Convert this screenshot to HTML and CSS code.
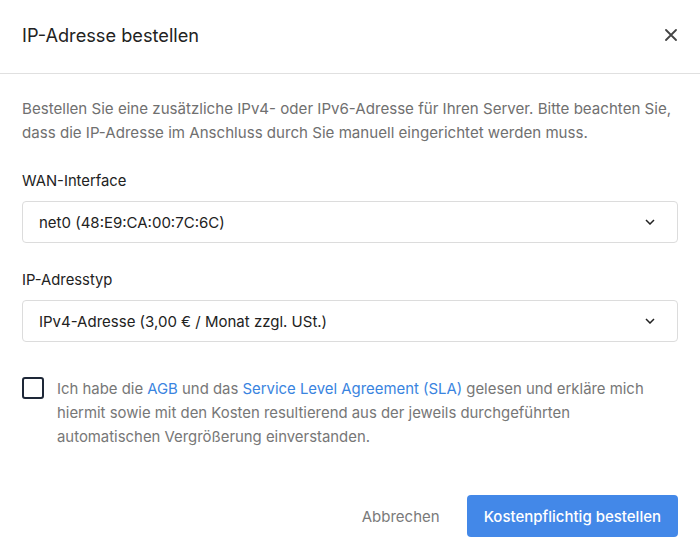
FILE: index.html
```html
<!DOCTYPE html>
<html lang="de">
<head>
<meta charset="utf-8">
<title>IP-Adresse bestellen</title>
<link rel="stylesheet" href="styles.css">
</head>
<body>
<div class="modal">
  <div class="header">
    <h1 class="title">IP-Adresse bestellen</h1>
    <button class="close" aria-label="Schließen">
      <svg width="12" height="12" viewBox="0 0 12 12"><path d="M1 1L11 11M11 1L1 11" stroke="#444" stroke-width="1.8" stroke-linecap="round"/></svg>
    </button>
  </div>
  <div class="body">
    <p class="desc">Bestellen Sie eine zusätzliche IPv4- oder IPv6-Adresse für Ihren Server. Bitte beachten Sie, dass die IP-Adresse im Anschluss durch Sie manuell eingerichtet werden muss.</p>
    <div class="field">
      <div class="label">WAN-Interface</div>
      <div class="select"><span>net0 (48:E9:CA:00:7C:6C)</span>
        <svg class="chev" width="10" height="6" viewBox="0 0 10 6"><path d="M1 1L5 5L9 1" fill="none" stroke="#222" stroke-width="1.5"/></svg>
      </div>
    </div>
    <div class="field">
      <div class="label">IP-Adresstyp</div>
      <div class="select"><span>IPv4-Adresse (3,00 € / Monat zzgl. USt.)</span>
        <svg class="chev" width="10" height="6" viewBox="0 0 10 6"><path d="M1 1L5 5L9 1" fill="none" stroke="#222" stroke-width="1.5"/></svg>
      </div>
    </div>
    <label class="agree">
      <span class="box"></span>
      <span class="agree-text">Ich habe die <a href="#">AGB</a> und das <a href="#">Service Level Agreement (SLA)</a> gelesen und erkläre mich hiermit sowie mit den Kosten resultierend aus der jeweils durchgeführten automatischen Vergrößerung einverstanden.</span>
    </label>
  </div>
  <div class="footer">
    <button class="cancel">Abbrechen</button>
    <button class="primary">Kostenpflichtig bestellen</button>
  </div>
</div>
</body>
</html>
```
FILE: styles.css
```css
* { box-sizing: border-box; }
html, body { margin: 0; padding: 0; background: #fff; }
body { font-family: Inter, "Noto Sans", sans-serif; color: #222; }
.modal { width: 700px; height: 560px; background: #fff; }
.header {
  height: 74px;
  padding: 0 22px 4px;
  display: flex;
  align-items: center;
  justify-content: space-between;
  border-bottom: 1px solid #e0e0e0;
}
.title { margin: 0; font-size: 18.2px; font-weight: 400; color: #222; }
.close { border: 0; background: none; padding: 0; margin-right: 1px; display: flex; cursor: pointer; }
.body { padding: 23px 22px 0; }
.desc { margin: 0; font-size: 15.1px; line-height: 24px; color: #707070; }
.field { margin-top: 25px; }
.field + .field { margin-top: 26px; }
.label { font-size: 14.8px; line-height: 22px; color: #222; }
.select {
  margin-top: 9px;
  height: 42px;
  border: 1px solid #dcdcdc;
  border-radius: 4px;
  padding: 0 22px 0 16px;
  display: flex;
  align-items: center;
  justify-content: space-between;
  font-size: 15px;
  color: #222;
}
.chev { display: block; }
.agree { display: flex; gap: 13px; margin-top: 35px; cursor: pointer; }
.box {
  flex: none;
  width: 22px; height: 22px;
  border: 2px solid #1e2838;
  border-radius: 3px;
  margin-top: 0;
}
.agree-text { max-width: 594px; font-size: 14.9px; line-height: 24px; color: #777; }
.agree-text a { color: #3a84e0; text-decoration: none; }
.footer {
  display: flex;
  justify-content: flex-end;
  align-items: center;
  gap: 27px;
  padding: 46px 22px 0;
}
.cancel { border: 0; background: none; font-family: inherit; font-size: 15px; color: #7a7a7a; padding: 0; }
.primary {
  height: 42px;
  padding: 0 17px;
  border: 0;
  border-radius: 4px;
  background: #4388e8;
  color: #fff;
  font-family: inherit;
  font-size: 15px;
  font-weight: 500;
}
```
